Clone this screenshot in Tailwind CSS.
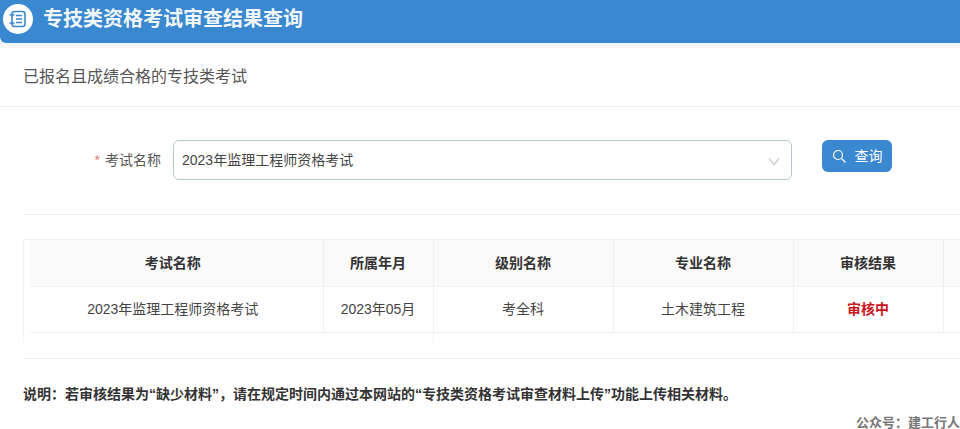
<!DOCTYPE html>
<html lang="zh-CN">
<head>
<meta charset="utf-8">
<script src="https://cdn.jsdelivr.net/npm/@tailwindcss/browser@4"></script>
</head>
<body class="bg-white font-['Liberation_Sans','Noto_Sans_CJK_SC',sans-serif] text-[#444] overflow-hidden">
<div class="w-[960px] h-[429px] overflow-hidden flex flex-col">
  <header class="h-[43px] shrink-0 bg-[#3a88cf] rounded-bl-md flex items-center pl-[3px] pb-[5px] gap-[10px]">
    <div class="w-[30px] h-[30px] rounded-full bg-white flex items-center justify-center">
      <svg width="22" height="22" viewBox="0 0 22 22" fill="none" stroke="#3a88cf" stroke-width="1.6">
        <rect x="5" y="3.5" width="13" height="15" rx="2.5"/>
        <path d="M2.5 7h5M2.5 15h5M9 7.5h6M9 11h6M9 14.5h6"/>
      </svg>
    </div>
    <h1 class="text-[20px] font-bold text-white/95 leading-none">专技类资格考试审查结果查询</h1>
  </header>
  <div class="h-[5px] shrink-0 bg-[#f5f5f6]"></div>
  <div class="h-[59px] shrink-0 border-b border-[#f0f0f0] pl-[23px] flex items-center text-[16px] text-[#555] pb-[1px]">已报名且成绩合格的专技类考试</div>
  <form class="h-[108px] shrink-0 ml-[23px] border-b border-[#f0f0f0] flex items-start pt-[33px]">
    <label class="w-[150px] pr-[12px] h-[40px] flex items-center justify-end text-[14px] text-[#555] gap-[5px]"><span class="text-[#c0392b]/70">*</span>考试名称</label>
    <div class="w-[619px] h-[40px] border border-[#b7c6cb] rounded-md px-[8px] flex items-center justify-between text-[14px] text-[#444]">
      <span>2023年监理工程师资格考试</span>
      <svg width="14" height="14" viewBox="0 0 14 14" fill="none" stroke="#c5cbd0" stroke-width="1.2" class="mr-[2px] mt-[2px]"><path d="M2 4.5l5 6 5-6"/></svg>
    </div>
    <button type="button" class="ml-[30px] w-[70px] h-[32px] bg-[#3a88cf] rounded-md text-white text-[14px] flex items-center justify-center gap-[9px]">
      <svg width="14" height="14" viewBox="0 0 14 14" fill="none" stroke="white" stroke-width="1.2"><circle cx="6" cy="6" r="4.5"/><path d="M9.5 9.5l4 4"/></svg>
      <span>查询</span>
    </button>
  </form>
  <div class="h-[24px] shrink-0"></div>
  <div class="shrink-0 ml-[23px] h-[120px] border-b border-[#f0f0f0] relative">
    <table class="w-[937px] table-fixed border-collapse border-t border-[#f0f0f0] text-[14px]">
      <colgroup><col class="w-[300px]"><col class="w-[110px]"><col class="w-[180px]"><col class="w-[180px]"><col class="w-[150px]"><col></colgroup>
      <thead>
        <tr class="h-[47px] bg-[#fafafa] border-b border-[#f3f3f3] text-[#333]">
          <th class="font-bold border-r border-[#f0f0f0]">考试名称</th>
          <th class="font-bold border-r border-[#f0f0f0]">所属年月</th>
          <th class="font-bold border-r border-[#f0f0f0]">级别名称</th>
          <th class="font-bold border-r border-[#f0f0f0]">专业名称</th>
          <th class="font-bold border-r border-[#f0f0f0]">审核结果</th>
          <th></th>
        </tr>
      </thead>
      <tbody>
        <tr class="h-[46px] border-b border-[#f0f0f0] text-[#444]">
          <td class="text-center border-r border-[#f0f0f0]">2023年监理工程师资格考试</td>
          <td class="text-center border-r border-[#f0f0f0]">2023年05月</td>
          <td class="text-center border-r border-[#f0f0f0]">考全科</td>
          <td class="text-center border-r border-[#f0f0f0]">土木建筑工程</td>
          <td class="text-center border-r border-[#f0f0f0] font-bold text-[#c8161d]">审核中</td>
          <td></td>
        </tr>
      </tbody>
    </table>
    <div class="absolute left-0 top-[1px] w-[7px] h-[103px] bg-white border-l border-[#f5f5f5]"></div>
    <div class="absolute left-[410px] top-[94px] h-[10px] border-l border-[#f5f5f5]"></div>
  </div>
  <p class="shrink-0 pl-[23px] mt-[22px] text-[14px] font-bold text-[#333] leading-[26px]">说明：若审核结果为“缺少材料”，请在规定时间内通过本网站的“专技类资格考试审查材料上传”功能上传相关材料。</p>
  <p class="shrink-0 text-right text-[13px] font-bold text-[#777] mt-[8px] leading-[16px]">公众号：建工行人</p>
</div>
</body>
</html>
